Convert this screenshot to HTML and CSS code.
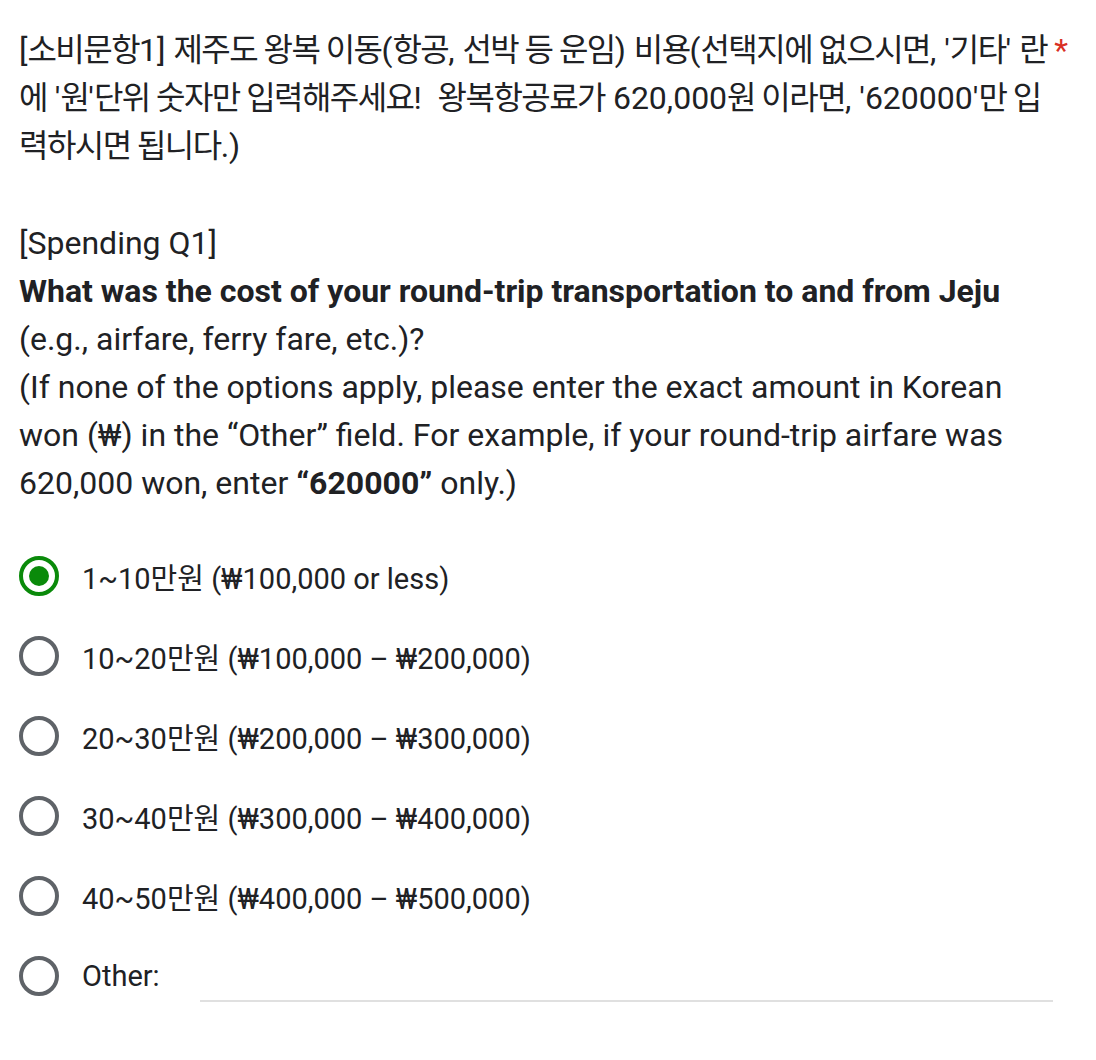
FILE: index.html
```html
<!DOCTYPE html>
<html lang="ko">
<head>
<meta charset="utf-8">
<link rel="stylesheet" href="styles.css">
</head>
<body>
<div class="question">
  <div class="title-row">
    <div class="title">[<span class="k">소비문항</span>1] <span class="k">제주도 왕복 이동</span>(<span class="k">항공</span>, <span class="k">선박 등 운임</span>) <span class="k">비용</span>(<span class="k">선택지에 없으시면</span>, '<span class="k">기타</span>' <span class="k">란</span><br><span class="k">에</span> '<span class="k">원</span>'<span class="k">단위 숫자만 입력해주세요</span>!&nbsp; <span class="k">왕복항공료가</span> 620,000<span class="k">원 이라면</span>, '620000'<span class="k">만 입</span><br><span class="k">력하시면 됩니다</span>.)</div>
    <span class="req">*</span>
  </div>
  <div class="desc">
    <div>[Spending Q1]</div>
    <div><b>What was the cost of your round-trip transportation to and from Jeju</b></div>
    <div>(e.g., airfare, ferry fare, etc.)?</div>
    <div>(If none of the options apply, please enter the exact amount in Korean won (₩) in the “Other” field. For example, if your round-trip airfare was 620,000 won, enter <b>“620000”</b> only.)</div>
  </div>
  <div class="options">
    <div class="opt"><span class="radio checked"></span><span class="label">1~10만원 (₩100,000 or less)</span></div>
    <div class="opt"><span class="radio"></span><span class="label">10~20만원 (₩100,000 – ₩200,000)</span></div>
    <div class="opt"><span class="radio"></span><span class="label">20~30만원 (₩200,000 – ₩300,000)</span></div>
    <div class="opt"><span class="radio"></span><span class="label">30~40만원 (₩300,000 – ₩400,000)</span></div>
    <div class="opt"><span class="radio"></span><span class="label">40~50만원 (₩400,000 – ₩500,000)</span></div>
    <div class="opt other"><span class="radio"></span><span class="label">Other:</span><span class="other-input"></span></div>
  </div>
</div>
</body>
</html>
```

FILE: styles.css
```css
html, body {
  margin: 0;
  padding: 0;
  background: #ffffff;
}
body {
  font-family: Roboto, "Noto Sans CJK KR", sans-serif;
  color: #202124;
}
.question {
  padding: 26px 28px 0 19px;
}
.title-row {
  display: flex;
  align-items: flex-start;
  font-size: 32px;
  line-height: 48px;
}
.title {
  flex: 1;
  min-width: 0;
  white-space: nowrap;
}
.k {
  letter-spacing: -1.55px;
}
.req {
  color: #d93025;
  padding-left: 8px;
}
.desc {
  margin-top: 49px;
  font-size: 32px;
  line-height: 48px;
  max-width: 1035px;
}
.desc b {
  font-weight: 700;
}
.options {
  margin-top: 29px;
}
.opt {
  display: flex;
  align-items: center;
  height: 80px;
  font-size: 29px;
}
.radio {
  box-sizing: border-box;
  width: 40px;
  height: 40px;
  border-radius: 50%;
  border: 4px solid #5f6368;
  margin-right: 23px;
  flex: none;
  display: flex;
  align-items: center;
  justify-content: center;
}
.radio.checked {
  border-color: #0a8a0a;
}
.radio.checked::after {
  content: "";
  width: 20px;
  height: 20px;
  border-radius: 50%;
  background: #0a8a0a;
}
.other-input {
  flex: 1;
  align-self: flex-end;
  margin: 0 15px 14px 40px;
  height: 2px;
  background: #e0e0e0;
}
```
